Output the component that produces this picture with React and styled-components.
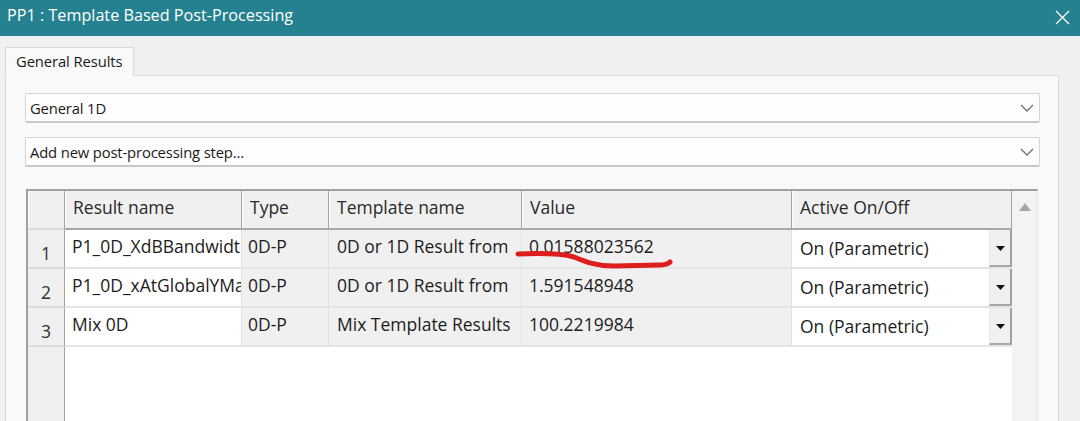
import styled, { createGlobalStyle } from 'styled-components'

const Global = createGlobalStyle`
  html, body {
    margin: 0;
    padding: 0;
    background: #f0f0f0;
  }
  * {
    box-sizing: border-box;
  }
`

const Window = styled.div`
  width: 1080px;
  height: 421px;
  overflow: hidden;
  background: #f0f0f0;
  font-family: 'Open Sans', 'Noto Sans', sans-serif;
  display: flex;
  flex-direction: column;
`

const TitleBar = styled.div`
  height: 36px;
  flex: none;
  background: #25818f;
  color: #fff;
  display: flex;
  align-items: center;
  justify-content: space-between;
  padding: 0 10px 6px 7px;
  font-size: 16.2px;
`

const CloseButton = styled.div`
  display: flex;
  align-items: center;
  padding-top: 5px;
`

const Body = styled.div`
  flex: 1;
  display: flex;
  flex-direction: column;
  padding: 11px 21px 0 5px;
  min-height: 0;
`

const TabStrip = styled.div`
  display: flex;
  flex: none;
`

const Tab = styled.div`
  width: 129px;
  height: 29px;
  margin-bottom: -1px;
  padding: 3px 0 0 10px;
  background: #f9f9f9;
  border: 1px solid #dadada;
  border-bottom-color: #f9f9f9;
  font-size: 14.8px;
  color: #1a1a1a;
  letter-spacing: -0.1px;
  z-index: 1;
`

const Panel = styled.div`
  flex: 1;
  background: #f9f9f9;
  border: 1px solid #dadada;
  border-bottom: none;
  padding: 17px 18px 0 19px;
  display: flex;
  flex-direction: column;
  min-height: 0;
`

const Combo = styled.div`
  height: ${p => p.$h}px;
  flex: none;
  margin-bottom: ${p => p.$gap}px;
  background: #fdfdfd;
  border: 1px solid #d3d3d3;
  border-bottom: 2px solid #c8c8c8;
  border-radius: 2px;
  display: flex;
  align-items: center;
  justify-content: space-between;
  padding: 0 5px 0 4px;
  font-size: 14.8px;
  color: #1a1a1a;
  letter-spacing: -0.15px;
`

const Frame = styled.div`
  flex: none;
  height: 260px;
  margin: 0 2px 0 1px;
  display: flex;
  border-top: 2px solid #a0a0a0;
  border-left: 2px solid #a0a0a0;
  border-right: 1px solid #e6e6e6;
  background: #fff;
`

const Grid = styled.div`
  flex: 1;
  display: grid;
  grid-template-columns: 37px 177px 87px 193px 270px 220px;
  grid-template-rows: 39px 39px 39px 39px 1fr;
  font-size: 17.5px;
  color: #1c1c1c;
`

const HeadCell = styled.div`
  background: #f0f0f0;
  border-right: 1px solid #a3a3a3;
  border-bottom: 2px solid #a8a8a8;
  box-shadow: inset 1px 0 0 #fdfdfd;
  padding: 4px 0 0 8px;
  color: #2a2a2a;
  white-space: nowrap;
  overflow: hidden;
`

const RowHead = styled.div`
  background: #f0f0f0;
  border-right: 1px solid #a3a3a3;
  border-bottom: ${p => (p.$filler ? 'none' : '2px solid #dcdcdc')};
  display: flex;
  align-items: center;
  justify-content: center;
  padding-top: 9px;
  color: #303030;
`

const Cell = styled.div`
  position: relative;
  background: ${p => (p.$editable ? '#ffffff' : '#f0f0f0')};
  border-right: 1px solid #e2e2e2;
  border-bottom: 2px solid #e4e4e4;
  padding: 4px 0 0 ${p => p.$pad || 7}px;
  white-space: nowrap;
  overflow: ${p => (p.$mark ? 'visible' : 'hidden')};
`

const SelectCell = styled.div`
  background: #fff;
  border-bottom: 2px solid #e4e4e4;
  display: flex;
  justify-content: space-between;
  padding-left: 8px;
`

const SelectText = styled.span`
  padding-top: 6px;
  white-space: nowrap;
`

const DropButton = styled.div`
  width: 23px;
  background: #f0f0f0;
  border-left: 1px solid #e8e8e8;
  border-right: 2px solid #a0a0a0;
  border-bottom: 2px solid #a8a8a8;
  display: flex;
  justify-content: center;
  padding-top: 16px;
`

const Blank = styled.div`
  grid-column: 2 / span 5;
  background: #fff;
`

const ScrollBar = styled.div`
  width: 25px;
  background: #f3f3f3;
  display: flex;
  justify-content: center;
  padding-top: 12px;
`

const Mark = styled.svg`
  position: absolute;
  left: -8px;
  top: 18px;
  overflow: visible;
  pointer-events: none;
`

const Chevron = () => (
  <svg width="14" height="8" viewBox="0 0 14 8">
    <path d="M1 1 L7 7 L13 1" fill="none" stroke="#6e6e6e" strokeWidth="1.3" />
  </svg>
)

const Caret = () => (
  <svg width="9" height="5" viewBox="0 0 9 5">
    <path d="M0 0 H9 L4.5 5 Z" fill="#111" />
  </svg>
)

const rows = [
  { n: 1, name: 'P1_0D_XdBBandwidth', type: '0D-P', template: '0D or 1D Result from', value: '0.01588023562', mark: true },
  { n: 2, name: 'P1_0D_xAtGlobalYMax', type: '0D-P', template: '0D or 1D Result from', value: '1.591548948' },
  { n: 3, name: 'Mix 0D', type: '0D-P', template: 'Mix Template Results', value: '100.2219984' },
]

const headers = ['Result name', 'Type', 'Template name', 'Value', 'Active On/Off']

export default function App() {
  return (
    <Window>
      <Global />
      <TitleBar>
        <span>PP1 : Template Based Post-Processing</span>
        <CloseButton>
          <svg width="15" height="15" viewBox="0 0 15 15">
            <path d="M1 1 L14 14 M14 1 L1 14" stroke="#fff" strokeWidth="1.3" />
          </svg>
        </CloseButton>
      </TitleBar>
      <Body>
        <TabStrip>
          <Tab>General Results</Tab>
        </TabStrip>
        <Panel>
          <Combo $h={30} $gap={14}>
            <span>General 1D</span>
            <Chevron />
          </Combo>
          <Combo $h={30} $gap={22}>
            <span>Add new post-processing step...</span>
            <Chevron />
          </Combo>
          <Frame>
            <Grid>
              <RowHead as={HeadCell} />
              {headers.map(h => (
                <HeadCell key={h}>{h}</HeadCell>
              ))}
              {rows.map(r => [
                <RowHead key={`n${r.n}`}>{r.n}</RowHead>,
                <Cell key={`a${r.n}`} $editable>{r.name}</Cell>,
                <Cell key={`b${r.n}`} $pad={6}>{r.type}</Cell>,
                <Cell key={`c${r.n}`} $pad={8}>{r.template}</Cell>,
                <Cell key={`d${r.n}`} $mark={r.mark}>
                  {r.value}
                  {r.mark && (
                    <Mark width="160" height="24" viewBox="0 0 160 24">
                      <path
                        d="M4 6 C 30 5, 50 6, 60 9 C 72 14, 82 18, 100 18 L 145 17 C 150 17, 154 16, 156 14"
                        fill="none"
                        stroke="#de1d1d"
                        strokeWidth="5"
                        strokeLinecap="round"
                      />
                    </Mark>
                  )}
                </Cell>,
                <SelectCell key={`e${r.n}`}>
                  <SelectText>On (Parametric)</SelectText>
                  <DropButton>
                    <Caret />
                  </DropButton>
                </SelectCell>,
              ])}
              <RowHead $filler />
              <Blank />
            </Grid>
            <ScrollBar>
              <svg width="12" height="8" viewBox="0 0 12 8">
                <path d="M0 8 L6 0 L12 8 Z" fill="#a6a6a6" />
              </svg>
            </ScrollBar>
          </Frame>
        </Panel>
      </Body>
    </Window>
  )
}
